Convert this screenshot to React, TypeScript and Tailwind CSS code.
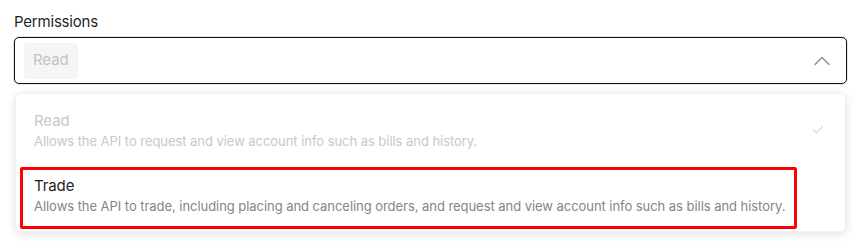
import { ChevronUp, Check } from "lucide-react";

const options = [
  {
    value: "read",
    label: "Read",
    desc: "Allows the API to request and view account info such as bills and history.",
    selected: true,
  },
  {
    value: "trade",
    label: "Trade",
    desc: "Allows the API to trade, including placing and canceling orders, and request and view account info such as bills and history.",
    selected: false,
  },
];

export default function App() {
  return (
    <div className="w-[863px] h-[249px] bg-white font-['Inter',sans-serif] pl-[14px] pr-[16px] pt-[12px]">
      {/* Label */}
      <div className="text-[15px] leading-[20px] text-[#1f1f1f] tracking-[-0.2px]">Permissions</div>

      {/* Select box */}
      <div className="mt-[5px] h-[47px] rounded-[5px] border-[1.5px] border-[#111] ring-1 ring-[#e6e6e6] flex items-center justify-between pl-[9px] pr-[10px]">
        <span className="h-[36px] px-[9px] rounded-[4px] bg-[#f5f5f5] text-[15px] text-[#c2c2c2] flex items-center tracking-[-0.1px]">
          Read
        </span>
        <ChevronUp className="w-[28px] h-[28px] text-[#8a8a8a]" strokeWidth={1.1} />
      </div>

      {/* Dropdown */}
      <div className="mt-[9px] ml-px mr-px rounded-[5px] bg-white shadow-[0_2px_10px_rgba(0,0,0,0.12)] border border-[#f0f0f0] pt-[17px] pb-[2px] px-[4px]">
        {options.map((o) => (
          <div
            key={o.value}
            className={
              o.selected
                ? "flex items-start justify-between pl-[14px] pr-[16px] h-[56px]"
                : "flex items-start justify-between pl-[11px] pt-[6px] h-[62px] mr-[44px] border-[3px] border-[#ff0000] rounded-[2px]"
            }
          >
            <div className="flex flex-col whitespace-nowrap">
              <span
                className={
                  o.selected
                    ? "text-[15px] leading-[20px] text-[#c8c8c8] tracking-[-0.1px]"
                    : "text-[15px] leading-[20px] text-[#1f1f1f] tracking-[-0.1px]"
                }
              >
                {o.label}
              </span>
              <span
                className={
                  o.selected
                    ? "text-[13px] leading-[20px] text-[#c8c8c8] tracking-[-0.05px]"
                    : "text-[13px] leading-[20px] text-[#858585] tracking-[-0.05px]"
                }
              >
                {o.desc}
              </span>
            </div>
            {o.selected && <Check className="w-[14px] h-[14px] text-[#b5b5b5] mt-[12px]" strokeWidth={1.5} />}
          </div>
        ))}
      </div>
    </div>
  );
}
